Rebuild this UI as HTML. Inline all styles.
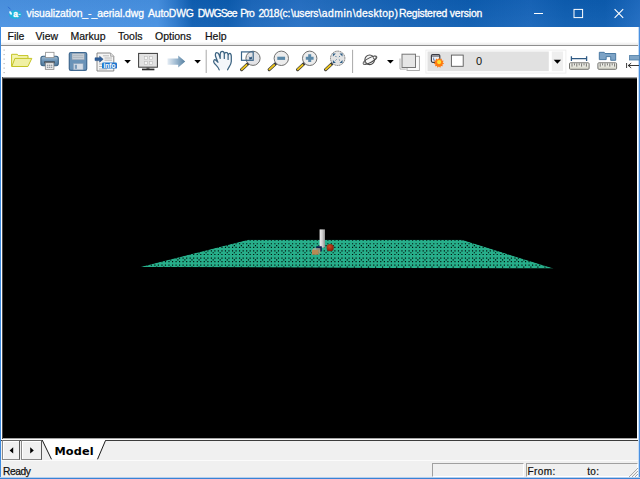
<!DOCTYPE html>
<html><head><meta charset="utf-8"><title>DWGSee</title>
<style>
html,body{margin:0;padding:0;}
body{width:640px;height:479px;overflow:hidden;background:#fff;position:relative;font-family:"Liberation Sans",sans-serif;}
.abs{position:absolute;}
#title{left:0;top:0;width:640px;height:27px;background:linear-gradient(180deg,rgba(0,0,0,0.03),rgba(255,255,255,0.04)),linear-gradient(90deg,#4a92e2 0px,#4690e1 158px,#2b78cc 176px,#0f5fb3 192px,#0c5cb0 228px,#1c68bc 252px,#2670c4 300px,#1e6abc 345px,#1462b6 400px,#0d5db1 470px,#1765ba 530px,#0d5db1 565px,#0c5cb0 605px,#1f6cc2 640px);}
#title span{position:absolute;top:7.5px;color:#fff;-webkit-text-stroke:0.3px #fff;font-size:10.4px;line-height:12px;white-space:pre;}
#lb{left:0;top:27px;width:1px;height:452px;background:#3f8ce0;}
#rb{left:638px;top:27px;width:2px;height:452px;background:linear-gradient(90deg,#c4dcf6 0,#c4dcf6 1px,#4a90e0 1px);}
#bb{left:0;top:477px;width:640px;height:2px;background:linear-gradient(180deg,#b4cfee 0,#b4cfee 1px,#3a82d4 1px);}
#menu{left:1px;top:27px;width:638px;height:18px;background:linear-gradient(180deg,#fff 0,#fff 15px,#f6f6f6 16px,#eaeaea 18px);}
#menu span{position:absolute;top:3px;-webkit-text-stroke:0.2px #111;font-size:10.5px;line-height:12px;color:#111;white-space:pre;}
#msep{left:1px;top:45px;width:638px;height:1px;background:#8e8e8e;}
#tb{left:1px;top:46px;width:638px;height:31px;background:#fff;}
#canvas{left:2px;top:77px;width:635px;height:362px;background:linear-gradient(180deg,#9a9a9a 0,#9a9a9a 1px,#363636 1px,#363636 2px,#000 2px,#000 361px,#a4a4a4 361px);border-left:1px solid #4a4a4a;box-sizing:border-box;}
#tabbar{left:1px;top:439px;width:638px;height:21px;background:linear-gradient(180deg,#fdfdfd 0,#fdfdfd 1px,#3c3c3c 1px,#3c3c3c 2px,#f0f0f0 2px);}
#status{left:1px;top:460px;width:638px;height:18px;background:linear-gradient(180deg,#fbfbfb 0,#fbfbfb 1px,#f0f0f0 1px);}
#status span,#tabbar span,#tb span{position:absolute;white-space:pre;}
.pane{position:absolute;top:463px;height:14px;border:1px solid;border-color:#a0a0a0 #fff #fff #a0a0a0;box-sizing:border-box;}
.sbtn{position:absolute;top:440px;height:20px;background:#f0f0f0;border:1px solid;border-color:#6a6a6a #5a5a5a #8a8a8a #8a8a8a;box-sizing:border-box;box-shadow:inset 1px 1px 0 #fff;}
#ov{left:0;top:0;width:640px;height:479px;}
</style></head><body>
<div id="title" class="abs">
<span style="left:26.5px;letter-spacing:-0.057px">visualization_-_aerial.dwg</span>
<span style="left:148.0px;letter-spacing:-0.147px">AutoDWG</span>
<span style="left:197.8px;letter-spacing:-0.85px">DWGSee</span>
<span style="left:240.3px;letter-spacing:-0.9px">Pro</span>
<span style="left:258.4px;letter-spacing:-0.694px">2018</span>
<span style="left:279.4px;letter-spacing:-0.232px">(c:</span>
<span style="left:291.0px;letter-spacing:-0.150px">\users</span>
<span style="left:318.5px;letter-spacing:0.469px">\admin</span>
<span style="left:352.8px;letter-spacing:0.294px">\desktop)</span>
<span style="left:399.0px;letter-spacing:-0.225px">Registered</span>
<span style="left:449.8px;letter-spacing:-0.157px">version</span>
</div>
<div id="menu" class="abs">
<span style="left:6.5px">File</span><span style="left:34.5px">View</span><span style="left:69.5px">Markup</span><span style="left:117px">Tools</span><span style="left:154px">Options</span><span style="left:204px">Help</span>
</div>
<div id="msep" class="abs"></div>
<div id="tb" class="abs"></div>
<div id="canvas" class="abs"></div>
<div id="tabbar" class="abs"></div>
<div id="status" class="abs"></div>
<div class="sbtn" style="left:2px;width:18px"></div>
<div class="sbtn" style="left:21px;width:21px"></div>
<div class="pane" style="left:432px;width:92px"></div>
<div class="pane" style="left:526px;width:112px"></div>
<div id="lb" class="abs"></div><div id="rb" class="abs"></div><div id="bb" class="abs"></div>
<svg id="ov" class="abs" viewBox="0 0 640 479">
<defs>
<linearGradient id="cyl" x1="0" x2="1" y1="0" y2="0"><stop offset="0" stop-color="#f0f0f0"/><stop offset="0.5" stop-color="#d0d0d0"/><stop offset="1" stop-color="#909090"/></linearGradient>
<radialGradient id="sph" cx="0.4" cy="0.35" r="0.7"><stop offset="0" stop-color="#d04820"/><stop offset="1" stop-color="#7a1808"/></radialGradient>
</defs>
<!-- window controls -->
<path d="M534,13.5 h9" stroke="#fff" stroke-width="1"/>
<rect x="574" y="9.4" width="8.6" height="8.2" fill="none" stroke="#fff" stroke-width="1"/>
<path d="M614.6,9.2 l8.6,8.6 M623.2,9.2 l-8.6,8.6" stroke="#fff" stroke-width="1.1"/>
<!-- app icon -->
<path d="M8,6.8 L10.6,9.4" stroke="#2a6ad0" stroke-width="1"/>
<ellipse cx="15.3" cy="14.6" rx="6.2" ry="4.4" fill="#1fb2da"/>
<ellipse cx="10.6" cy="13" rx="1.1" ry="2" fill="#e8fbff" transform="rotate(-30 10.6 13)"/>
<text x="15.5" y="17.2" font-family="Liberation Sans, sans-serif" font-weight="bold" font-size="8.4" fill="#fff" stroke="#fff" stroke-width="0.4" text-anchor="middle">a</text>
<path d="M18.6,14.4 h2" stroke="#e8fbff" stroke-width="0.9"/>
<!-- toolbar -->
<g id="icons">
<!-- gripper -->
<g fill="#9a9a9a"><rect x="3.6" y="49.6" width="1" height="1"/><rect x="3.6" y="54.1" width="1" height="1"/><rect x="3.6" y="58.6" width="1" height="1"/><rect x="3.6" y="63.1" width="1" height="1"/><rect x="3.6" y="67.6" width="1" height="1"/><rect x="3.6" y="72.1" width="1" height="1"/></g>
<!-- folder -->
<path d="M11.6,66.4 V54.3 H17.3 L18.2,55.6 H28 V58.3" fill="#f4f4b0" stroke="#c4c424" stroke-width="1"/>
<path d="M11.8,66.5 L14.9,58.4 H31.8 L27.9,66.5 Z" fill="#f0f0a4" stroke="#c4c424" stroke-width="1" stroke-linejoin="round"/>
<!-- printer -->
<linearGradient id="prn" x1="0" x2="0" y1="0" y2="1"><stop offset="0" stop-color="#a4bed4"/><stop offset="0.45" stop-color="#6f96b8"/><stop offset="1" stop-color="#4e7698"/></linearGradient>
<rect x="40.9" y="56.3" width="17.4" height="9.5" rx="2.2" fill="url(#prn)" stroke="#3a6284" stroke-width="1.1"/>
<rect x="45.6" y="52.3" width="8.4" height="5.3" fill="#fff" stroke="#8e8e8e" stroke-width="0.8"/>
<rect x="44.2" y="61.3" width="10.6" height="2" fill="#3e4a56"/>
<rect x="45.3" y="62.8" width="8.6" height="6.5" fill="#f4f4f4" stroke="#7e7e7e" stroke-width="0.8"/>
<path d="M46.8,65.2 h5.6 M46.8,67.2 h5.6" stroke="#5c6670" stroke-width="0.9" stroke-dasharray="1.6 0.5"/>
<!-- floppy -->
<rect x="69.3" y="52.5" width="17.4" height="17.8" rx="1.6" fill="#6a93b8" stroke="#3f6890" stroke-width="1.2"/>
<rect x="72" y="53.4" width="12.3" height="6.4" fill="#c6ced6" stroke="#8898a8" stroke-width="0.5"/>
<path d="M73,55.4 h10.3 M73,57.4 h10.3" stroke="#a0a8b0" stroke-width="0.6"/>
<rect x="73.5" y="63.6" width="9.6" height="6.2" fill="#d4dce6" stroke="#8aa0b8" stroke-width="0.5"/>
<rect x="74.8" y="64.8" width="2.2" height="4" fill="#7a9cbc"/>
<!-- info doc -->
<path d="M97,53 H110.5 L113.8,56.3 V71 H97 Z" fill="#f4f4f4" stroke="#7c7c7c" stroke-width="0.9"/>
<path d="M110.5,53 V56.3 H113.8" fill="#d8d8d8" stroke="#909090" stroke-width="0.6"/>
<path d="M103,55.8 h6 M104.5,58 h7.5 M104.5,60.2 h7.5 M99,64 h3 M99,66.5 h3 M99,69 h8" stroke="#a8a8a8" stroke-width="0.8"/>
<path d="M95,57.8 H99.6 V56.2 L103.2,59.2 L99.6,62.2 V60.6 H95 Z" fill="#2f5f9a" stroke="#1f4a80" stroke-width="0.5"/>
<rect x="102" y="62.6" width="15" height="6" rx="1.2" fill="#1e78d0"/>
<text x="109.5" y="67.7" font-family="Liberation Sans, sans-serif" font-weight="bold" font-size="6.6" fill="#fff" text-anchor="middle" textLength="12" lengthAdjust="spacingAndGlyphs">info</text>
<!-- dropdown arrows -->
<path d="M124.3,60 h6.6 l-3.3,3.6z M194.3,60 h6.6 l-3.3,3.6z M387,60 h6.8 l-3.4,3.6z" fill="#000"/>
<!-- monitor -->
<rect x="138.6" y="53.4" width="18.8" height="13.8" fill="#e2e2e2" stroke="#3a3a3a" stroke-width="1"/>
<g fill="#f6f6f6" stroke="#bdbdbd" stroke-width="0.6"><rect x="144.4" y="56.6" width="3" height="3"/><rect x="149.5" y="56.6" width="3" height="3"/><rect x="144.4" y="61.6" width="3" height="3"/><rect x="149.5" y="61.6" width="3" height="3"/></g>
<rect x="146.5" y="67.4" width="3" height="1.4" fill="#555"/>
<rect x="142" y="68.6" width="12.4" height="1.7" fill="#2c2c2c"/>
<!-- arrow right -->
<linearGradient id="arr" x1="0" x2="1" y1="0" y2="0"><stop offset="0" stop-color="#e4ecf4"/><stop offset="0.5" stop-color="#9cb8d0"/><stop offset="1" stop-color="#557f9f"/></linearGradient>
<path d="M167.5,58.6 H178.2 V55.6 L185.2,61.6 L178.2,67.6 V64.7 H167.5 Z" fill="url(#arr)"/>
<!-- separators -->
<path d="M206.2,49.8 V73 M352.6,49.8 V73" stroke="#a8a8a8" stroke-width="1"/>
<!-- hand -->
<path d="M219.2,69.8 C218.4,66.6 215.4,65.2 214,62.6 C213,60.6 214.4,59 216,60.2 L217.6,61.6 L215.6,56.6 C215,54 215.6,52.6 216.8,52.6 C218.2,52.6 218.8,53.6 219.2,55 L220.2,57 L220.2,54 C220.4,52 221.4,51.4 222.2,51.4 C223.4,51.4 224.2,52.4 224.3,54 C224.6,52.8 225.4,52.2 226.2,52.3 C227.4,52.4 228,53.4 228.1,55 C228.4,54 229,53.2 229.8,53.3 C231,53.5 231.3,54.8 231.3,56.5 L231.3,61.6 C231.2,65 228.6,66.8 227.6,69.8 Z" fill="#f3f6fa"/>
<path d="M219.2,69.8 C218.4,66.6 215.4,65.2 214,62.6 C213,60.6 214.4,59 216,60.2 L218,62.2 M217.6,61.6 L215.6,56.6 C215,54 215.6,52.6 216.8,52.6 C218.2,52.6 218.8,53.6 219.2,55 L220.2,58.4 M220.2,58.4 L220.2,54 C220.4,52 221.4,51.4 222.2,51.4 C223.4,51.4 224.2,52.4 224.3,54 L224.3,58.4 M224.3,54.4 C224.6,52.8 225.4,52.2 226.2,52.3 C227.4,52.4 228,53.4 228.1,55 L228.1,59.4 M228.1,55.6 C228.4,54 229,53.2 229.8,53.3 C231,53.5 231.3,54.8 231.3,56.5 L231.3,61.6 C231.2,65 228.6,66.8 227.6,69.8" fill="none" stroke="#3d6482" stroke-width="1.25" stroke-linecap="round" stroke-linejoin="round"/>
<!-- magnifiers -->
<g id="mag1">
<path d="M247.8,63.8 L241.6,69.6" stroke="#3a3a3a" stroke-width="3.2" stroke-linecap="round"/>
<path d="M246.6,65 L241.8,69.4" stroke="#ecc41c" stroke-width="1.8" stroke-linecap="round"/>
<rect x="241.5" y="51.9" width="11.7" height="8.4" fill="#fff"/>
<circle cx="253" cy="58.3" r="7.1" fill="rgba(222,222,226,0.85)" stroke="#707070" stroke-width="1"/>
<rect x="241.5" y="51.9" width="11.7" height="8.4" fill="none" stroke="#3a6488" stroke-width="1.2"/>
<path d="M248.8,56.8 l2.4,2 M251.4,57 v2 h-2.2z" stroke="#2a5078" stroke-width="0.8" fill="#2a5078"/>
</g>
<g id="mag2">
<path d="M275.4,63.8 L269.2,69.6" stroke="#3a3a3a" stroke-width="3.2" stroke-linecap="round"/>
<path d="M274.2,65 L269.4,69.4" stroke="#ecc41c" stroke-width="1.8" stroke-linecap="round"/>
<circle cx="281.3" cy="58.3" r="7.2" fill="#ececec" stroke="#707070" stroke-width="1"/>
<rect x="277.3" y="56.7" width="7.8" height="3.2" fill="#5a88a8"/>
</g>
<g id="mag3">
<path d="M303.8,63.8 L297.6,69.6" stroke="#3a3a3a" stroke-width="3.2" stroke-linecap="round"/>
<path d="M302.6,65 L297.8,69.4" stroke="#ecc41c" stroke-width="1.8" stroke-linecap="round"/>
<circle cx="309.7" cy="58.3" r="7.2" fill="#ececec" stroke="#707070" stroke-width="1"/>
<path d="M305.8,56.7 h2.4 v-2.4 h3 v2.4 h2.4 v3 h-2.4 v2.4 h-3 v-2.4 h-2.4z" fill="#5a88a8"/>
</g>
<g id="mag4">
<path d="M331.8,63.8 L325.6,69.6" stroke="#3a3a3a" stroke-width="3.2" stroke-linecap="round"/>
<path d="M330.6,65 L325.8,69.4" stroke="#ecc41c" stroke-width="1.8" stroke-linecap="round"/>
<circle cx="337.7" cy="58.3" r="7.2" fill="#e4e4e4" stroke="#707070" stroke-width="1" stroke-dasharray="1.2 0.6"/>
<path d="M332.9,53.6 h3 l-3,3z M342.5,53.6 v3 l-3,-3z M332.9,63 v-3 l3,3z M342.5,63 h-3 l3,-3z" fill="#2f5f86"/>
<path d="M335.6,56.2 l0.9,0.9 M339.8,56.2 l-0.9,0.9 M335.6,60.4 l0.9,-0.9 M339.8,60.4 l-0.9,-0.9" stroke="#3a6a90" stroke-width="1"/>
</g>
<!-- orbit -->
<circle cx="369.7" cy="59.8" r="4.8" fill="#f7f7f7" stroke="#4a4a4a" stroke-width="1.1"/>
<ellipse cx="370" cy="60.2" rx="7.6" ry="2.3" transform="rotate(-28 370 60.2)" fill="none" stroke="#4a4a4a" stroke-width="1"/>
<circle cx="374.6" cy="57.6" r="1.4" fill="#fff" stroke="#4a4a4a" stroke-width="0.9"/>
<circle cx="364.4" cy="63.3" r="1" fill="#fff" stroke="#5a5a5a" stroke-width="0.6"/>
<!-- layers -->
<path d="M400,58.5 V69.1 H405.8" fill="none" stroke="#a8a8a8" stroke-width="0.9"/>
<rect x="407" y="56.3" width="12.4" height="14.2" fill="#fafafa" stroke="#a4a4a4" stroke-width="0.9"/>
<rect x="402" y="54.2" width="13.5" height="13.3" fill="#e6e6e6" stroke="#767676" stroke-width="1"/>
<!-- combo -->
<rect x="425.9" y="50.1" width="140" height="23" fill="#fff" stroke="#ededed" stroke-width="0.9"/>
<rect x="427.5" y="51.5" width="121.3" height="19.6" fill="#e1e1e1"/>
<rect x="551.8" y="51.5" width="11.3" height="19.6" fill="#efefef"/>
<path d="M553.7,59.7 h7.4 l-3.7,4z" fill="#000"/>
<rect x="431.4" y="54.5" width="8.4" height="7.8" rx="1.2" fill="#eceef2" stroke="#3c3c44" stroke-width="1.2"/>
<path d="M431.4,56 h8.4" stroke="#3c3c44" stroke-width="1"/>
<path d="M433.6,57.6 v2.6 h2" stroke="#5070a8" stroke-width="0.8" fill="none"/>
<path d="M439.1,57.9 l1,1.6 1.7,-0.9 0,1.9 1.9,0.3 -1,1.6 1.4,1.3 -1.8,0.7 0.5,1.8 -1.9,-0.2 -0.6,1.8 -1.4,-1.3 -1.4,1.3 -0.6,-1.8 -1.9,0.2 0.5,-1.8 -1.8,-0.7 1.4,-1.3 -1,-1.6 1.9,-0.3 0,-1.9 1.7,0.9z" fill="#ff7a10"/>
<circle cx="439.1" cy="62.1" r="2.1" fill="#ffe030"/>
<rect x="451.4" y="55.1" width="11.8" height="11.2" fill="#fff" stroke="#5a5a5a" stroke-width="0.9"/>
<!-- ruler 1 -->
<linearGradient id="rul" x1="0" x2="0" y1="0" y2="1"><stop offset="0" stop-color="#fcfcf8"/><stop offset="1" stop-color="#d4d4c8"/></linearGradient>
<rect x="569.5" y="62.8" width="19.6" height="6.5" rx="1" fill="url(#rul)" stroke="#747470" stroke-width="1"/>
<path d="M572,63.4 v3.2 M574.4,63.4 v2 M576.8,63.4 v3.2 M579.2,63.4 v2 M581.6,63.4 v3.2 M584,63.4 v2 M586.4,63.4 v3.2" stroke="#555550" stroke-width="0.8"/>
<path d="M571.4,58.65 H586.6 M571.4,56.3 v4.7 M586.6,56.3 v4.7" stroke="#2f5a84" stroke-width="1.3"/>
<!-- ruler 2 -->
<rect x="597.9" y="62.8" width="18.7" height="6.5" rx="1" fill="url(#rul)" stroke="#747470" stroke-width="1"/>
<path d="M600.2,63.4 v3.2 M602.6,63.4 v2 M605,63.4 v3.2 M607.4,63.4 v2 M609.8,63.4 v3.2 M612.2,63.4 v2 M614.6,63.4 v3.2" stroke="#555550" stroke-width="0.8"/>
<path d="M599.3,52.3 H604.2 L605,53.5 H615.7 V60.3 H610.7 V56.6 H606.2 V59.6 H599.3 Z" fill="#7da3c6" stroke="#40709c" stroke-width="0.9"/>
<!-- icon 3 partial -->
<rect x="629.6" y="55.6" width="10" height="4.4" fill="#7ea4c6" stroke="#4a7aa4" stroke-width="0.8"/>
<path d="M626.6,63 v5 M628.2,65.5 H639 M628.2,65.5 l3,-2.4 M628.2,65.5 l3,2.4" stroke="#222" stroke-width="0.9" fill="none"/>
</g>
<!-- scene -->
<clipPath id="pl"><polygon points="140,267 248,239.7 462,239.7 554,268.6"/></clipPath>
<g clip-path="url(#pl)"><polygon points="140,267 248,239.7 462,239.7 554,268.6" fill="#27ae8a"/>
<path fill="#00100b" d="M246.1,239.6h1.15v1.15h-1.15zM249.6,239.6h1.15v1.15h-1.15zM253.1,239.6h1.15v1.15h-1.15zM256.7,239.6h1.15v1.15h-1.15zM260.2,239.6h1.15v1.15h-1.15zM263.7,239.6h1.15v1.15h-1.15zM267.3,239.6h1.15v1.15h-1.15zM270.8,239.6h1.15v1.15h-1.15zM274.3,239.6h1.15v1.15h-1.15zM277.9,239.6h1.15v1.15h-1.15zM281.4,239.6h1.15v1.15h-1.15zM284.9,239.6h1.15v1.15h-1.15zM288.4,239.6h1.15v1.15h-1.15zM292.0,239.6h1.15v1.15h-1.15zM295.5,239.6h1.15v1.15h-1.15zM299.0,239.6h1.15v1.15h-1.15zM302.6,239.6h1.15v1.15h-1.15zM306.1,239.6h1.15v1.15h-1.15zM309.6,239.6h1.15v1.15h-1.15zM313.2,239.6h1.15v1.15h-1.15zM316.7,239.6h1.15v1.15h-1.15zM320.2,239.6h1.15v1.15h-1.15zM323.7,239.6h1.15v1.15h-1.15zM327.3,239.6h1.15v1.15h-1.15zM330.8,239.6h1.15v1.15h-1.15zM334.3,239.6h1.15v1.15h-1.15zM337.9,239.6h1.15v1.15h-1.15zM341.4,239.6h1.15v1.15h-1.15zM344.9,239.6h1.15v1.15h-1.15zM348.5,239.6h1.15v1.15h-1.15zM352.0,239.6h1.15v1.15h-1.15zM355.5,239.6h1.15v1.15h-1.15zM359.0,239.6h1.15v1.15h-1.15zM362.6,239.6h1.15v1.15h-1.15zM366.1,239.6h1.15v1.15h-1.15zM369.6,239.6h1.15v1.15h-1.15zM373.2,239.6h1.15v1.15h-1.15zM376.7,239.6h1.15v1.15h-1.15zM380.2,239.6h1.15v1.15h-1.15zM383.8,239.6h1.15v1.15h-1.15zM387.3,239.6h1.15v1.15h-1.15zM390.8,239.6h1.15v1.15h-1.15zM394.3,239.6h1.15v1.15h-1.15zM397.9,239.6h1.15v1.15h-1.15zM401.4,239.6h1.15v1.15h-1.15zM404.9,239.6h1.15v1.15h-1.15zM408.5,239.6h1.15v1.15h-1.15zM412.0,239.6h1.15v1.15h-1.15zM415.5,239.6h1.15v1.15h-1.15zM419.1,239.6h1.15v1.15h-1.15zM422.6,239.6h1.15v1.15h-1.15zM426.1,239.6h1.15v1.15h-1.15zM429.6,239.6h1.15v1.15h-1.15zM433.2,239.6h1.15v1.15h-1.15zM436.7,239.6h1.15v1.15h-1.15zM440.2,239.6h1.15v1.15h-1.15zM443.8,239.6h1.15v1.15h-1.15zM447.3,239.6h1.15v1.15h-1.15zM450.8,239.6h1.15v1.15h-1.15zM454.4,239.6h1.15v1.15h-1.15zM457.9,239.6h1.15v1.15h-1.15zM461.4,239.6h1.15v1.15h-1.15zM217.8,246.8h1.15v1.15h-1.15zM221.4,246.8h1.15v1.15h-1.15zM226.7,245.0h1.15v1.15h-1.15zM224.9,246.8h1.15v1.15h-1.15zM228.4,246.8h1.15v1.15h-1.15zM232.0,243.2h1.15v1.15h-1.15zM235.5,243.2h1.15v1.15h-1.15zM233.8,245.0h1.15v1.15h-1.15zM232.0,246.8h1.15v1.15h-1.15zM235.5,246.8h1.15v1.15h-1.15zM239.0,243.2h1.15v1.15h-1.15zM242.6,243.2h1.15v1.15h-1.15zM240.8,245.0h1.15v1.15h-1.15zM239.0,246.8h1.15v1.15h-1.15zM242.6,246.8h1.15v1.15h-1.15zM246.1,243.2h1.15v1.15h-1.15zM249.6,243.2h1.15v1.15h-1.15zM247.9,245.0h1.15v1.15h-1.15zM246.1,246.8h1.15v1.15h-1.15zM249.6,246.8h1.15v1.15h-1.15zM253.1,243.2h1.15v1.15h-1.15zM256.7,243.2h1.15v1.15h-1.15zM254.9,245.0h1.15v1.15h-1.15zM253.1,246.8h1.15v1.15h-1.15zM256.7,246.8h1.15v1.15h-1.15zM260.2,243.2h1.15v1.15h-1.15zM263.7,243.2h1.15v1.15h-1.15zM262.0,245.0h1.15v1.15h-1.15zM260.2,246.8h1.15v1.15h-1.15zM263.7,246.8h1.15v1.15h-1.15zM267.3,243.2h1.15v1.15h-1.15zM270.8,243.2h1.15v1.15h-1.15zM269.1,245.0h1.15v1.15h-1.15zM267.3,246.8h1.15v1.15h-1.15zM270.8,246.8h1.15v1.15h-1.15zM274.3,243.2h1.15v1.15h-1.15zM277.9,243.2h1.15v1.15h-1.15zM276.1,245.0h1.15v1.15h-1.15zM274.3,246.8h1.15v1.15h-1.15zM277.9,246.8h1.15v1.15h-1.15zM281.4,243.2h1.15v1.15h-1.15zM284.9,243.2h1.15v1.15h-1.15zM283.2,245.0h1.15v1.15h-1.15zM281.4,246.8h1.15v1.15h-1.15zM284.9,246.8h1.15v1.15h-1.15zM288.4,243.2h1.15v1.15h-1.15zM292.0,243.2h1.15v1.15h-1.15zM290.2,245.0h1.15v1.15h-1.15zM288.4,246.8h1.15v1.15h-1.15zM292.0,246.8h1.15v1.15h-1.15zM295.5,243.2h1.15v1.15h-1.15zM299.0,243.2h1.15v1.15h-1.15zM297.3,245.0h1.15v1.15h-1.15zM295.5,246.8h1.15v1.15h-1.15zM299.0,246.8h1.15v1.15h-1.15zM302.6,243.2h1.15v1.15h-1.15zM306.1,243.2h1.15v1.15h-1.15zM304.4,245.0h1.15v1.15h-1.15zM302.6,246.8h1.15v1.15h-1.15zM306.1,246.8h1.15v1.15h-1.15zM309.6,243.2h1.15v1.15h-1.15zM313.2,243.2h1.15v1.15h-1.15zM311.4,245.0h1.15v1.15h-1.15zM309.6,246.8h1.15v1.15h-1.15zM313.2,246.8h1.15v1.15h-1.15zM316.7,243.2h1.15v1.15h-1.15zM320.2,243.2h1.15v1.15h-1.15zM318.5,245.0h1.15v1.15h-1.15zM316.7,246.8h1.15v1.15h-1.15zM320.2,246.8h1.15v1.15h-1.15zM323.7,243.2h1.15v1.15h-1.15zM327.3,243.2h1.15v1.15h-1.15zM325.5,245.0h1.15v1.15h-1.15zM323.7,246.8h1.15v1.15h-1.15zM327.3,246.8h1.15v1.15h-1.15zM330.8,243.2h1.15v1.15h-1.15zM334.3,243.2h1.15v1.15h-1.15zM332.6,245.0h1.15v1.15h-1.15zM330.8,246.8h1.15v1.15h-1.15zM334.3,246.8h1.15v1.15h-1.15zM337.9,243.2h1.15v1.15h-1.15zM341.4,243.2h1.15v1.15h-1.15zM339.7,245.0h1.15v1.15h-1.15zM337.9,246.8h1.15v1.15h-1.15zM341.4,246.8h1.15v1.15h-1.15zM344.9,243.2h1.15v1.15h-1.15zM348.5,243.2h1.15v1.15h-1.15zM346.7,245.0h1.15v1.15h-1.15zM344.9,246.8h1.15v1.15h-1.15zM348.5,246.8h1.15v1.15h-1.15zM352.0,243.2h1.15v1.15h-1.15zM355.5,243.2h1.15v1.15h-1.15zM353.8,245.0h1.15v1.15h-1.15zM352.0,246.8h1.15v1.15h-1.15zM355.5,246.8h1.15v1.15h-1.15zM359.0,243.2h1.15v1.15h-1.15zM362.6,243.2h1.15v1.15h-1.15zM360.8,245.0h1.15v1.15h-1.15zM359.0,246.8h1.15v1.15h-1.15zM362.6,246.8h1.15v1.15h-1.15zM366.1,243.2h1.15v1.15h-1.15zM369.6,243.2h1.15v1.15h-1.15zM367.9,245.0h1.15v1.15h-1.15zM366.1,246.8h1.15v1.15h-1.15zM369.6,246.8h1.15v1.15h-1.15zM373.2,243.2h1.15v1.15h-1.15zM376.7,243.2h1.15v1.15h-1.15zM375.0,245.0h1.15v1.15h-1.15zM373.2,246.8h1.15v1.15h-1.15zM376.7,246.8h1.15v1.15h-1.15zM380.2,243.2h1.15v1.15h-1.15zM383.8,243.2h1.15v1.15h-1.15zM382.0,245.0h1.15v1.15h-1.15zM380.2,246.8h1.15v1.15h-1.15zM383.8,246.8h1.15v1.15h-1.15zM387.3,243.2h1.15v1.15h-1.15zM390.8,243.2h1.15v1.15h-1.15zM389.1,245.0h1.15v1.15h-1.15zM387.3,246.8h1.15v1.15h-1.15zM390.8,246.8h1.15v1.15h-1.15zM394.3,243.2h1.15v1.15h-1.15zM397.9,243.2h1.15v1.15h-1.15zM396.1,245.0h1.15v1.15h-1.15zM394.3,246.8h1.15v1.15h-1.15zM397.9,246.8h1.15v1.15h-1.15zM401.4,243.2h1.15v1.15h-1.15zM404.9,243.2h1.15v1.15h-1.15zM403.2,245.0h1.15v1.15h-1.15zM401.4,246.8h1.15v1.15h-1.15zM404.9,246.8h1.15v1.15h-1.15zM408.5,243.2h1.15v1.15h-1.15zM412.0,243.2h1.15v1.15h-1.15zM410.3,245.0h1.15v1.15h-1.15zM408.5,246.8h1.15v1.15h-1.15zM412.0,246.8h1.15v1.15h-1.15zM415.5,243.2h1.15v1.15h-1.15zM419.1,243.2h1.15v1.15h-1.15zM417.3,245.0h1.15v1.15h-1.15zM415.5,246.8h1.15v1.15h-1.15zM419.1,246.8h1.15v1.15h-1.15zM422.6,243.2h1.15v1.15h-1.15zM426.1,243.2h1.15v1.15h-1.15zM424.4,245.0h1.15v1.15h-1.15zM422.6,246.8h1.15v1.15h-1.15zM426.1,246.8h1.15v1.15h-1.15zM429.6,243.2h1.15v1.15h-1.15zM433.2,243.2h1.15v1.15h-1.15zM431.4,245.0h1.15v1.15h-1.15zM429.6,246.8h1.15v1.15h-1.15zM433.2,246.8h1.15v1.15h-1.15zM436.7,243.2h1.15v1.15h-1.15zM440.2,243.2h1.15v1.15h-1.15zM438.5,245.0h1.15v1.15h-1.15zM436.7,246.8h1.15v1.15h-1.15zM440.2,246.8h1.15v1.15h-1.15zM443.8,243.2h1.15v1.15h-1.15zM447.3,243.2h1.15v1.15h-1.15zM445.6,245.0h1.15v1.15h-1.15zM443.8,246.8h1.15v1.15h-1.15zM447.3,246.8h1.15v1.15h-1.15zM450.8,243.2h1.15v1.15h-1.15zM454.4,243.2h1.15v1.15h-1.15zM452.6,245.0h1.15v1.15h-1.15zM450.8,246.8h1.15v1.15h-1.15zM454.4,246.8h1.15v1.15h-1.15zM457.9,243.2h1.15v1.15h-1.15zM461.4,243.2h1.15v1.15h-1.15zM459.7,245.0h1.15v1.15h-1.15zM457.9,246.8h1.15v1.15h-1.15zM461.4,246.8h1.15v1.15h-1.15zM464.9,243.2h1.15v1.15h-1.15zM468.5,243.2h1.15v1.15h-1.15zM466.7,245.0h1.15v1.15h-1.15zM464.9,246.8h1.15v1.15h-1.15zM468.5,246.8h1.15v1.15h-1.15zM472.0,243.2h1.15v1.15h-1.15zM473.8,245.0h1.15v1.15h-1.15zM472.0,246.8h1.15v1.15h-1.15zM475.5,246.8h1.15v1.15h-1.15zM479.1,246.8h1.15v1.15h-1.15zM482.6,246.8h1.15v1.15h-1.15zM189.6,253.9h1.15v1.15h-1.15zM193.1,253.9h1.15v1.15h-1.15zM198.5,252.2h1.15v1.15h-1.15zM196.7,253.9h1.15v1.15h-1.15zM200.2,253.9h1.15v1.15h-1.15zM203.7,250.3h1.15v1.15h-1.15zM207.3,250.3h1.15v1.15h-1.15zM205.5,252.2h1.15v1.15h-1.15zM203.7,253.9h1.15v1.15h-1.15zM207.3,253.9h1.15v1.15h-1.15zM210.8,250.3h1.15v1.15h-1.15zM214.3,250.3h1.15v1.15h-1.15zM212.6,252.2h1.15v1.15h-1.15zM210.8,253.9h1.15v1.15h-1.15zM214.3,253.9h1.15v1.15h-1.15zM217.8,250.3h1.15v1.15h-1.15zM221.4,250.3h1.15v1.15h-1.15zM219.6,252.2h1.15v1.15h-1.15zM217.8,253.9h1.15v1.15h-1.15zM221.4,253.9h1.15v1.15h-1.15zM224.9,250.3h1.15v1.15h-1.15zM228.4,250.3h1.15v1.15h-1.15zM226.7,252.2h1.15v1.15h-1.15zM224.9,253.9h1.15v1.15h-1.15zM228.4,253.9h1.15v1.15h-1.15zM232.0,250.3h1.15v1.15h-1.15zM235.5,250.3h1.15v1.15h-1.15zM233.8,252.2h1.15v1.15h-1.15zM232.0,253.9h1.15v1.15h-1.15zM235.5,253.9h1.15v1.15h-1.15zM239.0,250.3h1.15v1.15h-1.15zM242.6,250.3h1.15v1.15h-1.15zM240.8,252.2h1.15v1.15h-1.15zM239.0,253.9h1.15v1.15h-1.15zM242.6,253.9h1.15v1.15h-1.15zM246.1,250.3h1.15v1.15h-1.15zM249.6,250.3h1.15v1.15h-1.15zM247.9,252.2h1.15v1.15h-1.15zM246.1,253.9h1.15v1.15h-1.15zM249.6,253.9h1.15v1.15h-1.15zM253.1,250.3h1.15v1.15h-1.15zM256.7,250.3h1.15v1.15h-1.15zM254.9,252.2h1.15v1.15h-1.15zM253.1,253.9h1.15v1.15h-1.15zM256.7,253.9h1.15v1.15h-1.15zM260.2,250.3h1.15v1.15h-1.15zM263.7,250.3h1.15v1.15h-1.15zM262.0,252.2h1.15v1.15h-1.15zM260.2,253.9h1.15v1.15h-1.15zM263.7,253.9h1.15v1.15h-1.15zM267.3,250.3h1.15v1.15h-1.15zM270.8,250.3h1.15v1.15h-1.15zM269.1,252.2h1.15v1.15h-1.15zM267.3,253.9h1.15v1.15h-1.15zM270.8,253.9h1.15v1.15h-1.15zM274.3,250.3h1.15v1.15h-1.15zM277.9,250.3h1.15v1.15h-1.15zM276.1,252.2h1.15v1.15h-1.15zM274.3,253.9h1.15v1.15h-1.15zM277.9,253.9h1.15v1.15h-1.15zM281.4,250.3h1.15v1.15h-1.15zM284.9,250.3h1.15v1.15h-1.15zM283.2,252.2h1.15v1.15h-1.15zM281.4,253.9h1.15v1.15h-1.15zM284.9,253.9h1.15v1.15h-1.15zM288.4,250.3h1.15v1.15h-1.15zM292.0,250.3h1.15v1.15h-1.15zM290.2,252.2h1.15v1.15h-1.15zM288.4,253.9h1.15v1.15h-1.15zM292.0,253.9h1.15v1.15h-1.15zM295.5,250.3h1.15v1.15h-1.15zM299.0,250.3h1.15v1.15h-1.15zM297.3,252.2h1.15v1.15h-1.15zM295.5,253.9h1.15v1.15h-1.15zM299.0,253.9h1.15v1.15h-1.15zM302.6,250.3h1.15v1.15h-1.15zM306.1,250.3h1.15v1.15h-1.15zM304.4,252.2h1.15v1.15h-1.15zM302.6,253.9h1.15v1.15h-1.15zM306.1,253.9h1.15v1.15h-1.15zM309.6,250.3h1.15v1.15h-1.15zM313.2,250.3h1.15v1.15h-1.15zM311.4,252.2h1.15v1.15h-1.15zM309.6,253.9h1.15v1.15h-1.15zM313.2,253.9h1.15v1.15h-1.15zM316.7,250.3h1.15v1.15h-1.15zM320.2,250.3h1.15v1.15h-1.15zM318.5,252.2h1.15v1.15h-1.15zM316.7,253.9h1.15v1.15h-1.15zM320.2,253.9h1.15v1.15h-1.15zM323.7,250.3h1.15v1.15h-1.15zM327.3,250.3h1.15v1.15h-1.15zM325.5,252.2h1.15v1.15h-1.15zM323.7,253.9h1.15v1.15h-1.15zM327.3,253.9h1.15v1.15h-1.15zM330.8,250.3h1.15v1.15h-1.15zM334.3,250.3h1.15v1.15h-1.15zM332.6,252.2h1.15v1.15h-1.15zM330.8,253.9h1.15v1.15h-1.15zM334.3,253.9h1.15v1.15h-1.15zM337.9,250.3h1.15v1.15h-1.15zM341.4,250.3h1.15v1.15h-1.15zM339.7,252.2h1.15v1.15h-1.15zM337.9,253.9h1.15v1.15h-1.15zM341.4,253.9h1.15v1.15h-1.15zM344.9,250.3h1.15v1.15h-1.15zM348.5,250.3h1.15v1.15h-1.15zM346.7,252.2h1.15v1.15h-1.15zM344.9,253.9h1.15v1.15h-1.15zM348.5,253.9h1.15v1.15h-1.15zM352.0,250.3h1.15v1.15h-1.15zM355.5,250.3h1.15v1.15h-1.15zM353.8,252.2h1.15v1.15h-1.15zM352.0,253.9h1.15v1.15h-1.15zM355.5,253.9h1.15v1.15h-1.15zM359.0,250.3h1.15v1.15h-1.15zM362.6,250.3h1.15v1.15h-1.15zM360.8,252.2h1.15v1.15h-1.15zM359.0,253.9h1.15v1.15h-1.15zM362.6,253.9h1.15v1.15h-1.15zM366.1,250.3h1.15v1.15h-1.15zM369.6,250.3h1.15v1.15h-1.15zM367.9,252.2h1.15v1.15h-1.15zM366.1,253.9h1.15v1.15h-1.15zM369.6,253.9h1.15v1.15h-1.15zM373.2,250.3h1.15v1.15h-1.15zM376.7,250.3h1.15v1.15h-1.15zM375.0,252.2h1.15v1.15h-1.15zM373.2,253.9h1.15v1.15h-1.15zM376.7,253.9h1.15v1.15h-1.15zM380.2,250.3h1.15v1.15h-1.15zM383.8,250.3h1.15v1.15h-1.15zM382.0,252.2h1.15v1.15h-1.15zM380.2,253.9h1.15v1.15h-1.15zM383.8,253.9h1.15v1.15h-1.15zM387.3,250.3h1.15v1.15h-1.15zM390.8,250.3h1.15v1.15h-1.15zM389.1,252.2h1.15v1.15h-1.15zM387.3,253.9h1.15v1.15h-1.15zM390.8,253.9h1.15v1.15h-1.15zM394.3,250.3h1.15v1.15h-1.15zM397.9,250.3h1.15v1.15h-1.15zM396.1,252.2h1.15v1.15h-1.15zM394.3,253.9h1.15v1.15h-1.15zM397.9,253.9h1.15v1.15h-1.15zM401.4,250.3h1.15v1.15h-1.15zM404.9,250.3h1.15v1.15h-1.15zM403.2,252.2h1.15v1.15h-1.15zM401.4,253.9h1.15v1.15h-1.15zM404.9,253.9h1.15v1.15h-1.15zM408.5,250.3h1.15v1.15h-1.15zM412.0,250.3h1.15v1.15h-1.15zM410.3,252.2h1.15v1.15h-1.15zM408.5,253.9h1.15v1.15h-1.15zM412.0,253.9h1.15v1.15h-1.15zM415.5,250.3h1.15v1.15h-1.15zM419.1,250.3h1.15v1.15h-1.15zM417.3,252.2h1.15v1.15h-1.15zM415.5,253.9h1.15v1.15h-1.15zM419.1,253.9h1.15v1.15h-1.15zM422.6,250.3h1.15v1.15h-1.15zM426.1,250.3h1.15v1.15h-1.15zM424.4,252.2h1.15v1.15h-1.15zM422.6,253.9h1.15v1.15h-1.15zM426.1,253.9h1.15v1.15h-1.15zM429.6,250.3h1.15v1.15h-1.15zM433.2,250.3h1.15v1.15h-1.15zM431.4,252.2h1.15v1.15h-1.15zM429.6,253.9h1.15v1.15h-1.15zM433.2,253.9h1.15v1.15h-1.15zM436.7,250.3h1.15v1.15h-1.15zM440.2,250.3h1.15v1.15h-1.15zM438.5,252.2h1.15v1.15h-1.15zM436.7,253.9h1.15v1.15h-1.15zM440.2,253.9h1.15v1.15h-1.15zM443.8,250.3h1.15v1.15h-1.15zM447.3,250.3h1.15v1.15h-1.15zM445.6,252.2h1.15v1.15h-1.15zM443.8,253.9h1.15v1.15h-1.15zM447.3,253.9h1.15v1.15h-1.15zM450.8,250.3h1.15v1.15h-1.15zM454.4,250.3h1.15v1.15h-1.15zM452.6,252.2h1.15v1.15h-1.15zM450.8,253.9h1.15v1.15h-1.15zM454.4,253.9h1.15v1.15h-1.15zM457.9,250.3h1.15v1.15h-1.15zM461.4,250.3h1.15v1.15h-1.15zM459.7,252.2h1.15v1.15h-1.15zM457.9,253.9h1.15v1.15h-1.15zM461.4,253.9h1.15v1.15h-1.15zM464.9,250.3h1.15v1.15h-1.15zM468.5,250.3h1.15v1.15h-1.15zM466.7,252.2h1.15v1.15h-1.15zM464.9,253.9h1.15v1.15h-1.15zM468.5,253.9h1.15v1.15h-1.15zM472.0,250.3h1.15v1.15h-1.15zM475.5,250.3h1.15v1.15h-1.15zM473.8,252.2h1.15v1.15h-1.15zM472.0,253.9h1.15v1.15h-1.15zM475.5,253.9h1.15v1.15h-1.15zM479.1,250.3h1.15v1.15h-1.15zM482.6,250.3h1.15v1.15h-1.15zM480.9,252.2h1.15v1.15h-1.15zM479.1,253.9h1.15v1.15h-1.15zM482.6,253.9h1.15v1.15h-1.15zM486.1,250.3h1.15v1.15h-1.15zM489.7,250.3h1.15v1.15h-1.15zM487.9,252.2h1.15v1.15h-1.15zM486.1,253.9h1.15v1.15h-1.15zM489.7,253.9h1.15v1.15h-1.15zM493.2,250.3h1.15v1.15h-1.15zM496.7,250.3h1.15v1.15h-1.15zM495.0,252.2h1.15v1.15h-1.15zM493.2,253.9h1.15v1.15h-1.15zM496.7,253.9h1.15v1.15h-1.15zM502.0,252.2h1.15v1.15h-1.15zM500.2,253.9h1.15v1.15h-1.15zM503.8,253.9h1.15v1.15h-1.15zM507.3,253.9h1.15v1.15h-1.15zM161.4,261.1h1.15v1.15h-1.15zM164.9,261.1h1.15v1.15h-1.15zM170.2,259.3h1.15v1.15h-1.15zM168.4,261.1h1.15v1.15h-1.15zM172.0,261.1h1.15v1.15h-1.15zM175.5,257.5h1.15v1.15h-1.15zM179.0,257.5h1.15v1.15h-1.15zM177.3,259.3h1.15v1.15h-1.15zM175.5,261.1h1.15v1.15h-1.15zM179.0,261.1h1.15v1.15h-1.15zM182.5,257.5h1.15v1.15h-1.15zM186.1,257.5h1.15v1.15h-1.15zM184.3,259.3h1.15v1.15h-1.15zM182.5,261.1h1.15v1.15h-1.15zM186.1,261.1h1.15v1.15h-1.15zM189.6,257.5h1.15v1.15h-1.15zM193.1,257.5h1.15v1.15h-1.15zM191.4,259.3h1.15v1.15h-1.15zM189.6,261.1h1.15v1.15h-1.15zM193.1,261.1h1.15v1.15h-1.15zM196.7,257.5h1.15v1.15h-1.15zM200.2,257.5h1.15v1.15h-1.15zM198.5,259.3h1.15v1.15h-1.15zM196.7,261.1h1.15v1.15h-1.15zM200.2,261.1h1.15v1.15h-1.15zM203.7,257.5h1.15v1.15h-1.15zM207.3,257.5h1.15v1.15h-1.15zM205.5,259.3h1.15v1.15h-1.15zM203.7,261.1h1.15v1.15h-1.15zM207.3,261.1h1.15v1.15h-1.15zM210.8,257.5h1.15v1.15h-1.15zM214.3,257.5h1.15v1.15h-1.15zM212.6,259.3h1.15v1.15h-1.15zM210.8,261.1h1.15v1.15h-1.15zM214.3,261.1h1.15v1.15h-1.15zM217.8,257.5h1.15v1.15h-1.15zM221.4,257.5h1.15v1.15h-1.15zM219.6,259.3h1.15v1.15h-1.15zM217.8,261.1h1.15v1.15h-1.15zM221.4,261.1h1.15v1.15h-1.15zM224.9,257.5h1.15v1.15h-1.15zM228.4,257.5h1.15v1.15h-1.15zM226.7,259.3h1.15v1.15h-1.15zM224.9,261.1h1.15v1.15h-1.15zM228.4,261.1h1.15v1.15h-1.15zM232.0,257.5h1.15v1.15h-1.15zM235.5,257.5h1.15v1.15h-1.15zM233.8,259.3h1.15v1.15h-1.15zM232.0,261.1h1.15v1.15h-1.15zM235.5,261.1h1.15v1.15h-1.15zM239.0,257.5h1.15v1.15h-1.15zM242.6,257.5h1.15v1.15h-1.15zM240.8,259.3h1.15v1.15h-1.15zM239.0,261.1h1.15v1.15h-1.15zM242.6,261.1h1.15v1.15h-1.15zM246.1,257.5h1.15v1.15h-1.15zM249.6,257.5h1.15v1.15h-1.15zM247.9,259.3h1.15v1.15h-1.15zM246.1,261.1h1.15v1.15h-1.15zM249.6,261.1h1.15v1.15h-1.15zM253.1,257.5h1.15v1.15h-1.15zM256.7,257.5h1.15v1.15h-1.15zM254.9,259.3h1.15v1.15h-1.15zM253.1,261.1h1.15v1.15h-1.15zM256.7,261.1h1.15v1.15h-1.15zM260.2,257.5h1.15v1.15h-1.15zM263.7,257.5h1.15v1.15h-1.15zM262.0,259.3h1.15v1.15h-1.15zM260.2,261.1h1.15v1.15h-1.15zM263.7,261.1h1.15v1.15h-1.15zM267.3,257.5h1.15v1.15h-1.15zM270.8,257.5h1.15v1.15h-1.15zM269.1,259.3h1.15v1.15h-1.15zM267.3,261.1h1.15v1.15h-1.15zM270.8,261.1h1.15v1.15h-1.15zM274.3,257.5h1.15v1.15h-1.15zM277.9,257.5h1.15v1.15h-1.15zM276.1,259.3h1.15v1.15h-1.15zM274.3,261.1h1.15v1.15h-1.15zM277.9,261.1h1.15v1.15h-1.15zM281.4,257.5h1.15v1.15h-1.15zM284.9,257.5h1.15v1.15h-1.15zM283.2,259.3h1.15v1.15h-1.15zM281.4,261.1h1.15v1.15h-1.15zM284.9,261.1h1.15v1.15h-1.15zM288.4,257.5h1.15v1.15h-1.15zM292.0,257.5h1.15v1.15h-1.15zM290.2,259.3h1.15v1.15h-1.15zM288.4,261.1h1.15v1.15h-1.15zM292.0,261.1h1.15v1.15h-1.15zM295.5,257.5h1.15v1.15h-1.15zM299.0,257.5h1.15v1.15h-1.15zM297.3,259.3h1.15v1.15h-1.15zM295.5,261.1h1.15v1.15h-1.15zM299.0,261.1h1.15v1.15h-1.15zM302.6,257.5h1.15v1.15h-1.15zM306.1,257.5h1.15v1.15h-1.15zM304.4,259.3h1.15v1.15h-1.15zM302.6,261.1h1.15v1.15h-1.15zM306.1,261.1h1.15v1.15h-1.15zM309.6,257.5h1.15v1.15h-1.15zM313.2,257.5h1.15v1.15h-1.15zM311.4,259.3h1.15v1.15h-1.15zM309.6,261.1h1.15v1.15h-1.15zM313.2,261.1h1.15v1.15h-1.15zM316.7,257.5h1.15v1.15h-1.15zM320.2,257.5h1.15v1.15h-1.15zM318.5,259.3h1.15v1.15h-1.15zM316.7,261.1h1.15v1.15h-1.15zM320.2,261.1h1.15v1.15h-1.15zM323.7,257.5h1.15v1.15h-1.15zM327.3,257.5h1.15v1.15h-1.15zM325.5,259.3h1.15v1.15h-1.15zM323.7,261.1h1.15v1.15h-1.15zM327.3,261.1h1.15v1.15h-1.15zM330.8,257.5h1.15v1.15h-1.15zM334.3,257.5h1.15v1.15h-1.15zM332.6,259.3h1.15v1.15h-1.15zM330.8,261.1h1.15v1.15h-1.15zM334.3,261.1h1.15v1.15h-1.15zM337.9,257.5h1.15v1.15h-1.15zM341.4,257.5h1.15v1.15h-1.15zM339.7,259.3h1.15v1.15h-1.15zM337.9,261.1h1.15v1.15h-1.15zM341.4,261.1h1.15v1.15h-1.15zM344.9,257.5h1.15v1.15h-1.15zM348.5,257.5h1.15v1.15h-1.15zM346.7,259.3h1.15v1.15h-1.15zM344.9,261.1h1.15v1.15h-1.15zM348.5,261.1h1.15v1.15h-1.15zM352.0,257.5h1.15v1.15h-1.15zM355.5,257.5h1.15v1.15h-1.15zM353.8,259.3h1.15v1.15h-1.15zM352.0,261.1h1.15v1.15h-1.15zM355.5,261.1h1.15v1.15h-1.15zM359.0,257.5h1.15v1.15h-1.15zM362.6,257.5h1.15v1.15h-1.15zM360.8,259.3h1.15v1.15h-1.15zM359.0,261.1h1.15v1.15h-1.15zM362.6,261.1h1.15v1.15h-1.15zM366.1,257.5h1.15v1.15h-1.15zM369.6,257.5h1.15v1.15h-1.15zM367.9,259.3h1.15v1.15h-1.15zM366.1,261.1h1.15v1.15h-1.15zM369.6,261.1h1.15v1.15h-1.15zM373.2,257.5h1.15v1.15h-1.15zM376.7,257.5h1.15v1.15h-1.15zM375.0,259.3h1.15v1.15h-1.15zM373.2,261.1h1.15v1.15h-1.15zM376.7,261.1h1.15v1.15h-1.15zM380.2,257.5h1.15v1.15h-1.15zM383.8,257.5h1.15v1.15h-1.15zM382.0,259.3h1.15v1.15h-1.15zM380.2,261.1h1.15v1.15h-1.15zM383.8,261.1h1.15v1.15h-1.15zM387.3,257.5h1.15v1.15h-1.15zM390.8,257.5h1.15v1.15h-1.15zM389.1,259.3h1.15v1.15h-1.15zM387.3,261.1h1.15v1.15h-1.15zM390.8,261.1h1.15v1.15h-1.15zM394.3,257.5h1.15v1.15h-1.15zM397.9,257.5h1.15v1.15h-1.15zM396.1,259.3h1.15v1.15h-1.15zM394.3,261.1h1.15v1.15h-1.15zM397.9,261.1h1.15v1.15h-1.15zM401.4,257.5h1.15v1.15h-1.15zM404.9,257.5h1.15v1.15h-1.15zM403.2,259.3h1.15v1.15h-1.15zM401.4,261.1h1.15v1.15h-1.15zM404.9,261.1h1.15v1.15h-1.15zM408.5,257.5h1.15v1.15h-1.15zM412.0,257.5h1.15v1.15h-1.15zM410.3,259.3h1.15v1.15h-1.15zM408.5,261.1h1.15v1.15h-1.15zM412.0,261.1h1.15v1.15h-1.15zM415.5,257.5h1.15v1.15h-1.15zM419.1,257.5h1.15v1.15h-1.15zM417.3,259.3h1.15v1.15h-1.15zM415.5,261.1h1.15v1.15h-1.15zM419.1,261.1h1.15v1.15h-1.15zM422.6,257.5h1.15v1.15h-1.15zM426.1,257.5h1.15v1.15h-1.15zM424.4,259.3h1.15v1.15h-1.15zM422.6,261.1h1.15v1.15h-1.15zM426.1,261.1h1.15v1.15h-1.15zM429.6,257.5h1.15v1.15h-1.15zM433.2,257.5h1.15v1.15h-1.15zM431.4,259.3h1.15v1.15h-1.15zM429.6,261.1h1.15v1.15h-1.15zM433.2,261.1h1.15v1.15h-1.15zM436.7,257.5h1.15v1.15h-1.15zM440.2,257.5h1.15v1.15h-1.15zM438.5,259.3h1.15v1.15h-1.15zM436.7,261.1h1.15v1.15h-1.15zM440.2,261.1h1.15v1.15h-1.15zM443.8,257.5h1.15v1.15h-1.15zM447.3,257.5h1.15v1.15h-1.15zM445.6,259.3h1.15v1.15h-1.15zM443.8,261.1h1.15v1.15h-1.15zM447.3,261.1h1.15v1.15h-1.15zM450.8,257.5h1.15v1.15h-1.15zM454.4,257.5h1.15v1.15h-1.15zM452.6,259.3h1.15v1.15h-1.15zM450.8,261.1h1.15v1.15h-1.15zM454.4,261.1h1.15v1.15h-1.15zM457.9,257.5h1.15v1.15h-1.15zM461.4,257.5h1.15v1.15h-1.15zM459.7,259.3h1.15v1.15h-1.15zM457.9,261.1h1.15v1.15h-1.15zM461.4,261.1h1.15v1.15h-1.15zM464.9,257.5h1.15v1.15h-1.15zM468.5,257.5h1.15v1.15h-1.15zM466.7,259.3h1.15v1.15h-1.15zM464.9,261.1h1.15v1.15h-1.15zM468.5,261.1h1.15v1.15h-1.15zM472.0,257.5h1.15v1.15h-1.15zM475.5,257.5h1.15v1.15h-1.15zM473.8,259.3h1.15v1.15h-1.15zM472.0,261.1h1.15v1.15h-1.15zM475.5,261.1h1.15v1.15h-1.15zM479.1,257.5h1.15v1.15h-1.15zM482.6,257.5h1.15v1.15h-1.15zM480.9,259.3h1.15v1.15h-1.15zM479.1,261.1h1.15v1.15h-1.15zM482.6,261.1h1.15v1.15h-1.15zM486.1,257.5h1.15v1.15h-1.15zM489.7,257.5h1.15v1.15h-1.15zM487.9,259.3h1.15v1.15h-1.15zM486.1,261.1h1.15v1.15h-1.15zM489.7,261.1h1.15v1.15h-1.15zM493.2,257.5h1.15v1.15h-1.15zM496.7,257.5h1.15v1.15h-1.15zM495.0,259.3h1.15v1.15h-1.15zM493.2,261.1h1.15v1.15h-1.15zM496.7,261.1h1.15v1.15h-1.15zM500.2,257.5h1.15v1.15h-1.15zM503.8,257.5h1.15v1.15h-1.15zM502.0,259.3h1.15v1.15h-1.15zM500.2,261.1h1.15v1.15h-1.15zM503.8,261.1h1.15v1.15h-1.15zM507.3,257.5h1.15v1.15h-1.15zM510.8,257.5h1.15v1.15h-1.15zM509.1,259.3h1.15v1.15h-1.15zM507.3,261.1h1.15v1.15h-1.15zM510.8,261.1h1.15v1.15h-1.15zM514.4,257.5h1.15v1.15h-1.15zM517.9,257.5h1.15v1.15h-1.15zM516.2,259.3h1.15v1.15h-1.15zM514.4,261.1h1.15v1.15h-1.15zM517.9,261.1h1.15v1.15h-1.15zM523.2,259.3h1.15v1.15h-1.15zM521.4,261.1h1.15v1.15h-1.15zM525.0,261.1h1.15v1.15h-1.15zM528.5,261.1h1.15v1.15h-1.15zM147.2,264.6h1.15v1.15h-1.15zM150.8,264.6h1.15v1.15h-1.15zM154.3,264.6h1.15v1.15h-1.15zM157.8,264.6h1.15v1.15h-1.15zM156.1,266.5h1.15v1.15h-1.15zM161.4,264.6h1.15v1.15h-1.15zM164.9,264.6h1.15v1.15h-1.15zM163.2,266.5h1.15v1.15h-1.15zM168.4,264.6h1.15v1.15h-1.15zM172.0,264.6h1.15v1.15h-1.15zM170.2,266.5h1.15v1.15h-1.15zM175.5,264.6h1.15v1.15h-1.15zM179.0,264.6h1.15v1.15h-1.15zM177.3,266.5h1.15v1.15h-1.15zM182.5,264.6h1.15v1.15h-1.15zM186.1,264.6h1.15v1.15h-1.15zM184.3,266.5h1.15v1.15h-1.15zM189.6,264.6h1.15v1.15h-1.15zM193.1,264.6h1.15v1.15h-1.15zM191.4,266.5h1.15v1.15h-1.15zM196.7,264.6h1.15v1.15h-1.15zM200.2,264.6h1.15v1.15h-1.15zM198.5,266.5h1.15v1.15h-1.15zM203.7,264.6h1.15v1.15h-1.15zM207.3,264.6h1.15v1.15h-1.15zM205.5,266.5h1.15v1.15h-1.15zM210.8,264.6h1.15v1.15h-1.15zM214.3,264.6h1.15v1.15h-1.15zM212.6,266.5h1.15v1.15h-1.15zM217.8,264.6h1.15v1.15h-1.15zM221.4,264.6h1.15v1.15h-1.15zM219.6,266.5h1.15v1.15h-1.15zM224.9,264.6h1.15v1.15h-1.15zM228.4,264.6h1.15v1.15h-1.15zM226.7,266.5h1.15v1.15h-1.15zM232.0,264.6h1.15v1.15h-1.15zM235.5,264.6h1.15v1.15h-1.15zM233.8,266.5h1.15v1.15h-1.15zM239.0,264.6h1.15v1.15h-1.15zM242.6,264.6h1.15v1.15h-1.15zM240.8,266.5h1.15v1.15h-1.15zM246.1,264.6h1.15v1.15h-1.15zM249.6,264.6h1.15v1.15h-1.15zM247.9,266.5h1.15v1.15h-1.15zM253.1,264.6h1.15v1.15h-1.15zM256.7,264.6h1.15v1.15h-1.15zM254.9,266.5h1.15v1.15h-1.15zM260.2,264.6h1.15v1.15h-1.15zM263.7,264.6h1.15v1.15h-1.15zM262.0,266.5h1.15v1.15h-1.15zM267.3,264.6h1.15v1.15h-1.15zM270.8,264.6h1.15v1.15h-1.15zM269.1,266.5h1.15v1.15h-1.15zM274.3,264.6h1.15v1.15h-1.15zM277.9,264.6h1.15v1.15h-1.15zM276.1,266.5h1.15v1.15h-1.15zM281.4,264.6h1.15v1.15h-1.15zM284.9,264.6h1.15v1.15h-1.15zM283.2,266.5h1.15v1.15h-1.15zM288.4,264.6h1.15v1.15h-1.15zM292.0,264.6h1.15v1.15h-1.15zM290.2,266.5h1.15v1.15h-1.15zM295.5,264.6h1.15v1.15h-1.15zM299.0,264.6h1.15v1.15h-1.15zM297.3,266.5h1.15v1.15h-1.15zM302.6,264.6h1.15v1.15h-1.15zM306.1,264.6h1.15v1.15h-1.15zM304.4,266.5h1.15v1.15h-1.15zM309.6,264.6h1.15v1.15h-1.15zM313.2,264.6h1.15v1.15h-1.15zM311.4,266.5h1.15v1.15h-1.15zM316.7,264.6h1.15v1.15h-1.15zM320.2,264.6h1.15v1.15h-1.15zM318.5,266.5h1.15v1.15h-1.15zM323.7,264.6h1.15v1.15h-1.15zM327.3,264.6h1.15v1.15h-1.15zM325.5,266.5h1.15v1.15h-1.15zM330.8,264.6h1.15v1.15h-1.15zM334.3,264.6h1.15v1.15h-1.15zM332.6,266.5h1.15v1.15h-1.15zM337.9,264.6h1.15v1.15h-1.15zM341.4,264.6h1.15v1.15h-1.15zM339.7,266.5h1.15v1.15h-1.15zM344.9,264.6h1.15v1.15h-1.15zM348.5,264.6h1.15v1.15h-1.15zM346.7,266.5h1.15v1.15h-1.15zM352.0,264.6h1.15v1.15h-1.15zM355.5,264.6h1.15v1.15h-1.15zM353.8,266.5h1.15v1.15h-1.15zM359.0,264.6h1.15v1.15h-1.15zM362.6,264.6h1.15v1.15h-1.15zM360.8,266.5h1.15v1.15h-1.15zM366.1,264.6h1.15v1.15h-1.15zM369.6,264.6h1.15v1.15h-1.15zM367.9,266.5h1.15v1.15h-1.15zM373.2,264.6h1.15v1.15h-1.15zM376.7,264.6h1.15v1.15h-1.15zM375.0,266.5h1.15v1.15h-1.15zM380.2,264.6h1.15v1.15h-1.15zM383.8,264.6h1.15v1.15h-1.15zM382.0,266.5h1.15v1.15h-1.15zM387.3,264.6h1.15v1.15h-1.15zM390.8,264.6h1.15v1.15h-1.15zM389.1,266.5h1.15v1.15h-1.15zM394.3,264.6h1.15v1.15h-1.15zM397.9,264.6h1.15v1.15h-1.15zM396.1,266.5h1.15v1.15h-1.15zM401.4,264.6h1.15v1.15h-1.15zM404.9,264.6h1.15v1.15h-1.15zM403.2,266.5h1.15v1.15h-1.15zM408.5,264.6h1.15v1.15h-1.15zM412.0,264.6h1.15v1.15h-1.15zM410.3,266.5h1.15v1.15h-1.15zM415.5,264.6h1.15v1.15h-1.15zM419.1,264.6h1.15v1.15h-1.15zM417.3,266.5h1.15v1.15h-1.15zM422.6,264.6h1.15v1.15h-1.15zM426.1,264.6h1.15v1.15h-1.15zM424.4,266.5h1.15v1.15h-1.15zM429.6,264.6h1.15v1.15h-1.15zM433.2,264.6h1.15v1.15h-1.15zM431.4,266.5h1.15v1.15h-1.15zM436.7,264.6h1.15v1.15h-1.15zM440.2,264.6h1.15v1.15h-1.15zM438.5,266.5h1.15v1.15h-1.15zM443.8,264.6h1.15v1.15h-1.15zM447.3,264.6h1.15v1.15h-1.15zM445.6,266.5h1.15v1.15h-1.15zM450.8,264.6h1.15v1.15h-1.15zM454.4,264.6h1.15v1.15h-1.15zM452.6,266.5h1.15v1.15h-1.15zM457.9,264.6h1.15v1.15h-1.15zM461.4,264.6h1.15v1.15h-1.15zM459.7,266.5h1.15v1.15h-1.15zM464.9,264.6h1.15v1.15h-1.15zM468.5,264.6h1.15v1.15h-1.15zM466.7,266.5h1.15v1.15h-1.15zM472.0,264.6h1.15v1.15h-1.15zM475.5,264.6h1.15v1.15h-1.15zM473.8,266.5h1.15v1.15h-1.15zM479.1,264.6h1.15v1.15h-1.15zM482.6,264.6h1.15v1.15h-1.15zM480.9,266.5h1.15v1.15h-1.15zM486.1,264.6h1.15v1.15h-1.15zM489.7,264.6h1.15v1.15h-1.15zM487.9,266.5h1.15v1.15h-1.15zM493.2,264.6h1.15v1.15h-1.15zM496.7,264.6h1.15v1.15h-1.15zM495.0,266.5h1.15v1.15h-1.15zM500.2,264.6h1.15v1.15h-1.15zM503.8,264.6h1.15v1.15h-1.15zM502.0,266.5h1.15v1.15h-1.15zM507.3,264.6h1.15v1.15h-1.15zM510.8,264.6h1.15v1.15h-1.15zM509.1,266.5h1.15v1.15h-1.15zM514.4,264.6h1.15v1.15h-1.15zM517.9,264.6h1.15v1.15h-1.15zM516.2,266.5h1.15v1.15h-1.15zM521.4,264.6h1.15v1.15h-1.15zM525.0,264.6h1.15v1.15h-1.15zM523.2,266.5h1.15v1.15h-1.15zM528.5,264.6h1.15v1.15h-1.15zM532.0,264.6h1.15v1.15h-1.15zM530.3,266.5h1.15v1.15h-1.15zM535.5,264.6h1.15v1.15h-1.15zM539.1,264.6h1.15v1.15h-1.15zM537.3,266.5h1.15v1.15h-1.15zM542.6,264.6h1.15v1.15h-1.15zM544.4,266.5h1.15v1.15h-1.15z"/></g>
<rect x="319.6" y="229.4" width="5.4" height="18.2" fill="url(#cyl)"/>
<circle cx="330.2" cy="247.7" r="3.6" fill="url(#sph)"/>
<path d="M316.2,246.2 H321.8 V251.2 H319.5 V249.8 H316.2 Z" fill="#0e1e50"/>
<rect x="312" y="249.8" width="6.7" height="4.9" fill="#b88a54"/>
<polygon points="312,249.8 313.8,248.3 320.3,248.3 318.7,249.8" fill="#b4aa92"/>
<polygon points="318.7,249.8 320.3,248.3 320.3,252.6 318.7,254.7" fill="#a89878"/>
<!-- tab -->
<polygon points="42,439 106.4,439 97.5,459.6 51.5,459.6" fill="#fff"/>
<path d="M42.3,440.3 L51.5,459.3 M105.6,440.3 L97.5,459.3" stroke="#000" stroke-width="0.9" fill="none"/>
<path d="M9.6,450.4 l3.6,-3.2 v6.4z M33.8,450.4 l-3.6,-3.2 v6.4z" fill="#000"/>
<!-- grip -->
<path d="M629,477 l9,-9 M632,477 l6,-6 M635,477 l3,-3" stroke="#a8a8a8" stroke-width="1"/>
</svg>
<span class="abs" style="left:3px;top:466px;font-size:10.2px;letter-spacing:-0.4px;line-height:12px;color:#111;-webkit-text-stroke:0.25px #111">Ready</span>
<span class="abs" style="left:527.6px;top:465.5px;font-size:10px;line-height:12px;letter-spacing:0.4px;color:#111;-webkit-text-stroke:0.2px #111">From:</span>
<span class="abs" style="left:587.2px;top:465.5px;font-size:10px;line-height:12px;letter-spacing:0.4px;color:#111;-webkit-text-stroke:0.2px #111">to:</span>
<span class="abs" id="model" style="left:54.4px;top:445px;font-family:'DejaVu Sans',sans-serif;font-weight:bold;font-size:11.3px;letter-spacing:0.15px;line-height:13px;color:#000">Model</span>
<span class="abs" id="zero" style="left:476px;top:55px;font-size:11px;line-height:12px;color:#111">0</span>
</body></html>
